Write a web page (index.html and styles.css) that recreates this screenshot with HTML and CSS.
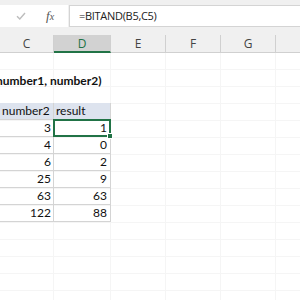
FILE: index.html
```html
<!DOCTYPE html>
<html>
<head>
<meta charset="utf-8">
<link rel="stylesheet" href="styles.css">
</head>
<body>
<div class="app">
  <div class="toolbar">
    <div class="fb-left">
      <svg class="check" width="10" height="8" viewBox="0 0 10 8"><path d="M1 4.2 L3.8 7 L9 1" fill="none" stroke="#bdbdbd" stroke-width="1.4"/></svg>
      <span class="fx">f<span class="fx-x">x</span></span>
    </div>
    <div class="fb-input">=BITAND(B5,C5)</div>
  </div>
  <div class="col-headers">
    <div class="ch c">C</div>
    <div class="ch d sel">D</div>
    <div class="ch e">E</div>
    <div class="ch e">F</div>
    <div class="ch e">G</div>
    <div class="ch h"></div>
  </div>
  <div class="sheet">
    <div class="title-row"><span class="title">number1, number2)</span></div>
    <div class="table">
      <div class="th">number2</div>
      <div class="th">result</div>
      <div class="td">3</div><div class="td active">1</div>
      <div class="td">4</div><div class="td">0</div>
      <div class="td">6</div><div class="td">2</div>
      <div class="td">25</div><div class="td">9</div>
      <div class="td">63</div><div class="td">63</div>
      <div class="td">122</div><div class="td">88</div>
    </div>
  </div>
</div>
</body>
</html>
```
FILE: styles.css
```css
html, body {
  margin: 0;
  padding: 0;
  background: #ffffff;
}
.app {
  width: 300px;
  height: 300px;
  overflow: hidden;
  font-family: Lato, "Liberation Sans", sans-serif;
}
.toolbar {
  display: flex;
  height: 22px;
  padding: 5px 0 8px 0;
  background: #f0f0f0;
  gap: 1px;
}
.fb-left {
  width: 68px;
  background: #ffffff;
  display: flex;
  align-items: center;
}
.check {
  margin-left: 16px;
}
.fx {
  margin-left: 20px;
  font-family: "Liberation Serif", serif;
  font-style: italic;
  font-size: 13px;
  color: #555555;
}
.fx-x {
  font-size: 10px;
}
.fb-input {
  flex: 1;
  background: #ffffff;
  border: 1px solid #d4d4d4;
  border-right: none;
  padding-left: 9px;
  font-family: "Open Sans", sans-serif;
  font-size: 11px;
  letter-spacing: -0.3px;
  line-height: 20px;
  color: #222222;
  white-space: nowrap;
}
.col-headers {
  display: flex;
  height: 18px;
  background: #f0f0f0;
}
.ch {
  box-sizing: border-box;
  border-right: 1px solid #d0d0d0;
  border-bottom: 1px solid #d0d0d0;
  text-align: center;
  font-family: "Open Sans", sans-serif;
  font-size: 12px;
  line-height: 17px;
  color: #444444;
  flex: none;
}
.ch.c { width: 54px; }
.ch.d { width: 57px; }
.ch.e { width: 55px; }
.ch.h { flex: 1; border-right: none; }
.ch.sel {
  background: #d2d2d2;
  color: #217346;
  border-bottom: 2px solid #217346;
}
.sheet {
  height: 247px;
  background-color: #ffffff;
  background-image:
    repeating-linear-gradient(to bottom, transparent 0 16px, #f5f5f5 16px 17px),
    linear-gradient(to right, transparent 0 53px, #f5f5f5 53px 54px, transparent 54px 110px, #f5f5f5 110px 111px, transparent 111px 165px, #f5f5f5 165px 166px, transparent 166px 220px, #f5f5f5 220px 221px, transparent 221px 275px, #f5f5f5 275px 276px, transparent 276px);
  padding-top: 17px;
  box-sizing: border-box;
}
.title-row {
  height: 17px;
  line-height: 17px;
  margin-left: -4px;
  white-space: nowrap;
}
.title {
  font-weight: bold;
  font-size: 12px;
  color: #111111;
}
.table {
  margin-top: 16px;
  display: grid;
  grid-template-columns: 54px 57px;
  grid-template-rows: 17px;
  grid-auto-rows: 17px;
  font-size: 12px;
  color: #111111;
}
.th, .td {
  box-sizing: border-box;
  border-right: 1px solid #d4d4d4;
  border-bottom: 1px solid #d4d4d4;
  line-height: 16px;
  white-space: nowrap;
}
.th {
  background: #dde3ee;
  padding-left: 2px;
  overflow: hidden;
}
.td {
  text-align: right;
  padding-right: 2px;
}
.td:nth-child(even) {
  padding-right: 3px;
}
.active {
  position: relative;
}
.active::after {
  content: "";
  position: absolute;
  left: -1px;
  top: -1px;
  right: -1px;
  bottom: -1px;
  border: 2px solid #217346;
}
.active::before {
  content: "";
  position: absolute;
  right: -3px;
  bottom: -3px;
  width: 4px;
  height: 4px;
  background: #217346;
  border: 1px solid #ffffff;
  z-index: 1;
}
```
